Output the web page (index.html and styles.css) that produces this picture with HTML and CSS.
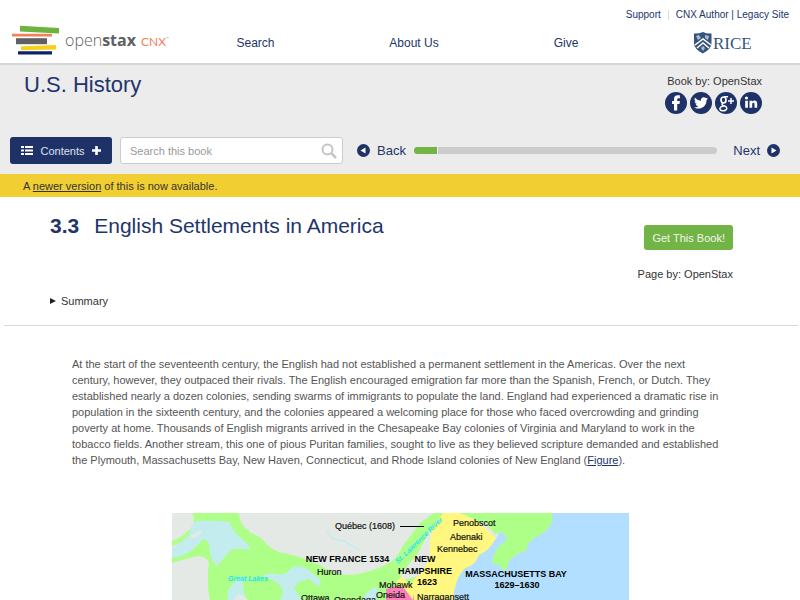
FILE: index.html
```html
<!DOCTYPE html>
<html lang="en">
<head>
<meta charset="utf-8">
<meta name="viewport" content="width=device-width, initial-scale=1">
<title>English Settlements in America - U.S. History - OpenStax CNX</title>
<link rel="stylesheet" href="styles.css">
</head>
<body>
<header class="site-header">
  <div class="utility">
    <a href="#">Support</a>
    <span class="divider"></span>
    <a href="#">CNX Author | Legacy Site</a>
  </div>
  <nav class="main-nav">
    <a class="logo" href="#">
      <svg width="176" height="41" viewBox="0 22 176 41" role="img" aria-label="OpenStax CNX">
        <path fill="#6db33f" d="M20 25.800 59 28v5.600l-39-2z"/>
        <path fill="#f0825a" d="M12 33.800h40v2.800H12z"/>
        <path fill="#5f6062" d="M16 38.200h31v6H16z"/>
        <path fill="#f5d11d" d="m21 46.200 35-1.200v4.400l-35 .8z"/>
        <path fill="#0b2265" d="M18 51.200h34v3.400H18z"/>
        <text class="logo-open" x="65" y="46">open<tspan class="logo-stax">stax</tspan></text>
        <text class="logo-cnx" x="141" y="46">CNX</text>
        <text class="logo-tm" x="166" y="40">™</text>
      </svg>
    </a>
    <a href="#">Search</a>
    <a href="#">About Us</a>
    <a href="#">Give</a>
    <a class="rice" href="#">
      <svg width="60" height="22" viewBox="0 0 60 22" role="img" aria-label="Rice">
        <path fill="#36557c" d="M0 1.500Q4 2 9 0q4 2 8.500 1.500V11q0 6-8.700 10.500Q0 17 0 11z"/>
        <path fill="#a9bdd2" d="m2 4 3-1 2 3-3 2zm9-1 4 1-1 4-3-2zM7 16l2-2 2 2-2 3z"/>
        <path fill="none" stroke="#fff" stroke-width="1.500" d="m1 13 8-6 8 6M3 16l6-5 6 5"/>
        <text class="rice-name" x="19" y="17">RICE</text>
      </svg>
    </a>
  </nav>
</header>

<section class="book-bar">
  <div class="book-head">
    <h2>U.S. History</h2>
    <div class="book-meta">
      <div>Book by: OpenStax</div>
      <div class="social">
        <a href="#" aria-label="Facebook"><svg width="22" height="22" viewBox="0 0 22 22"><circle cx="11" cy="11" r="11"/><path fill="#fff" d="M9 18.500V12H7V9h2V7q0-3.700 3.700-3.700h2.200v2.900h-1.500q-1.200 0-1.200 1.200V9h2.700l-.4 3h-2.300v6.500z"/></svg></a>
        <a href="#" aria-label="Twitter"><svg width="22" height="22" viewBox="0 0 22 22"><circle cx="11" cy="11" r="11"/><path fill="#fff" d="M18 6.500q-.8.400-1.600.4.900-.5 1.200-1.500-.8.500-1.800.7a2.900 2.900 0 0 0-4.900 2.600Q7.400 8.500 5 5.700 3.700 8 5.900 9.600q-.7 0-1.300-.4 0 2.100 2.300 2.900-.6.200-1.300.1.700 1.800 2.700 2-1.900 1.500-4.300 1.200 2 1.200 4.400 1.200c5.300 0 8.300-4.300 8.100-8.600q.9-.6 1.500-1.500z"/></svg></a>
        <a href="#" aria-label="Google Plus"><svg width="22" height="22" viewBox="0 0 22 22"><circle cx="11" cy="11" r="11"/><g fill="none" stroke="#fff"><ellipse cx="8.500" cy="8" rx="2.500" ry="3" stroke-width="1.700"/><path stroke-width="1.500" d="M9 4.800h4M8 11q-2 1.500 0 2.400c2 .8 3.800 1 3.800 2.800 0 2-2.200 2.700-4 2.500-2.600-.2-3.300-1.600-2.700-2.900.5-1.200 2-1.500 3.600-1.500M16 6v6M13 9h6"/></g></svg></a>
        <a href="#" aria-label="LinkedIn"><svg width="22" height="22" viewBox="0 0 22 22"><circle cx="11" cy="11" r="11"/><g fill="#fff"><circle cx="6.500" cy="6" r="1.600"/><path d="M5.200 8.700h2.700v7H5.200zM9.500 8.700H12v1q.8-1.200 2.400-1.200 2.800 0 2.800 3.200v4h-2.700V12q0-1.300-1.100-1.300-1.200 0-1.200 1.400v3.600H9.500z"/></g></svg></a>
      </div>
    </div>
  </div>
  <div class="controls">
    <button class="contents" type="button">
      <svg width="12" height="10" viewBox="0 0 12 10"><path fill="#fff" d="M0 0h3v2H0zm4 0h8v2H4zM0 3.500h3v2H0zm4 0h8v2H4zM0 7h3v2H0zm4 0h8v2H4z"/></svg>
      <span>Contents</span>
      <svg width="9" height="9" viewBox="0 0 9 9"><path fill="#fff" d="M3.200 0h2.600v3.200H9v2.600H5.800V9H3.200V5.800H0V3.200h3.200z"/></svg>
    </button>
    <form class="book-search">
      <input type="text" aria-label="Search this book" placeholder="Search this book">
      <button type="button" aria-label="Search"><svg width="16" height="16" viewBox="0 0 16 16"><g fill="none" stroke="#c4c4c4" stroke-width="2"><circle cx="6.500" cy="6.500" r="5"/><path stroke-width="2.500" d="m10.500 10.500 4.500 4.500"/></g></svg></button>
    </form>
    <a class="step" href="#">
      <svg width="13" height="13" viewBox="0 0 13 13"><circle cx="6.500" cy="6.500" r="6.500"/><path fill="#fff" d="M8.500 3.500v6l-5-3z"/></svg>
      Back
    </a>
    <div class="progress" role="progressbar" aria-label="Reading progress" aria-valuenow="8" aria-valuemin="0" aria-valuemax="100"><span style="width: 8%"></span></div>
    <a class="step" href="#">
      Next
      <svg width="13" height="13" viewBox="0 0 13 13"><circle cx="6.500" cy="6.500" r="6.500"/><path fill="#fff" d="M4.500 3.500v6l5-3z"/></svg>
    </a>
  </div>
</section>

<p class="notice">A <a href="#">newer version</a> of this is now available.</p>

<main>
  <section class="page-head">
    <div class="page-title">
      <h1><b>3.3</b><span>English Settlements in America</span></h1>
      <div class="page-meta">
        <button class="get-book" type="button">Get This Book!</button>
        <div>Page by: OpenStax</div>
      </div>
    </div>
    <details>
      <summary>Summary</summary>
    </details>
  </section>
  <article>
    <p>At the start of the seventeenth century, the English had not established a permanent settlement in the Americas. Over the next<br>
    century, however, they outpaced their rivals. The English encouraged emigration far more than the Spanish, French, or Dutch. They<br>
    established nearly a dozen colonies, sending swarms of immigrants to populate the land. England had experienced a dramatic rise in<br>
    population in the sixteenth century, and the colonies appeared a welcoming place for those who faced overcrowding and grinding<br>
    poverty at home. Thousands of English migrants arrived in the Chesapeake Bay colonies of Virginia and Maryland to work in the<br>
    tobacco fields. Another stream, this one of pious Puritan families, sought to live as they believed scripture demanded and established<br>
    the Plymouth, Massachusetts Bay, New Haven, Connecticut, and Rhode Island colonies of New England (<a href="#">Figure</a>).</p>
    <figure>
      <svg class="map" viewBox="172 513 457 87" role="img" aria-label="Map of the North American colonies">
        <path fill="#e5e9e6" d="M172 513h457v87H172z"/>
        <path fill="#aeff88" d="M192 513h47q1 14 10 17 10 4 18 14 20 6 34 9 15 5 20 13 15 9 28 9 22-2 38-11 11-6 15-17l18-24 14-10h46v87H210q-4-18-1-37-1-6-11-7-14 3-26 7v-12q10-5 14-9-12 2-14 5v-6q10-3 20-14 4-8 0-14z"/>
        <path fill="#e5e9e6" d="M249 513h171q-5 12-14 22-6 15-22 24-12 6-20 9-11 5-27 5-8-8-23-10-14-7-35-11-10-4-16-12-5-5-14-8z"/>
        <path fill="#c3ecef" d="M172 548q12-7 18-14 0-14 11-13 18-1 28 1 6 12 13 17 8 6 8 11-15-3-20 1-7 8-13 15-6-6-7-14 0-12-7-13-8 10-17 15-7 3-14 4z"/>
        <path fill="#e5e9e6" d="m190 536 10-6 2 2-5 5-7 1z"/>
        <path fill="#c3ecef" d="M239 578q21-1 33-5 4 3 15 0 6-10 19-5l15 12-2 7-10-8-10 3-5 6 8 12h-74q-2-8 3-14z"/>
        <path fill="#aeff88" d="M243 581q10-9 25-3 15 6 15 15l-3 7h-33q-5-9-4-19z"/>
        <path fill="#e5e9e6" d="M248 600q-5-6-11-5l-3 5zM172 566q14-5 26-6 9 0 10 6-2 18 1 34h-37z"/>
        <path fill="none" stroke="#c3ecef" stroke-width="1.500" d="m327 531 6 8 11 2 8 5 7 4"/>
        <path fill="#b2dfff" d="M534 513h95v87H451l4-29 12-3 14-18 15-11 4-9z"/>
        <path fill="#fff77f" d="M443 513h25q9 10 17 15l11 10q-7 13-17 17-4 11-14 13l-6 8q-5 11-6 24h-51l11-19q10-10 10-25-4-10 7-23 8-12 13-20z"/>
        <path fill="#aeff88" d="M460 513h92q3 14-14 23-10 4-12 15-8 1-16 9l-5 12-6-7-7-2q1-14 15-23l-4-8-8 2-11-12-13-4z"/>
        <path fill="#e5e9e6" d="M433 525q-4 15-3 33l-11 18-15 4-4-5 18-22z"/>
        <path fill="#c3ecef" d="m376 587 3 5-3 8h-13q2-9 13-13z"/>
        <path fill="#ff80bb" d="m386 589 11-3 9 1 8 8v5h-28z"/>
        <path fill="#fff77f" d="m397 581 5-5 12 16-1 8-9-12-7-3z"/>
        <path stroke="#000" d="M400 526.500h24"/>
        <g class="water">
          <text x="228" y="581">Great Lakes</text>
          <text transform="translate(398 564) rotate(-44)">St. Lawrence River</text>
        </g>
        <g class="places">
          <text x="335" y="529">Québec (1608)</text>
          <text x="453" y="526">Penobscot</text>
          <text x="450" y="540">Abenaki</text>
          <text x="437" y="552">Kennebec</text>
          <text x="317" y="575">Huron</text>
          <text x="379" y="588">Mohawk</text>
          <text x="376" y="598">Oneida</text>
          <text x="301" y="601">Ottawa</text>
          <text x="334" y="603">Onondaga</text>
          <text x="417" y="600">Narragansett</text>
        </g>
        <g class="colonies">
          <text x="347.500" y="562">NEW FRANCE 1534</text>
          <text x="425" y="562">NEW</text>
          <text x="425" y="574">HAMPSHIRE</text>
          <text x="427" y="585">1623</text>
          <text x="516" y="577">MASSACHUSETTS BAY</text>
          <text x="517" y="588">1629–1630</text>
        </g>
      </svg>
    </figure>
  </article>
</main>
</body>
</html>
```
FILE: styles.css
```css
* { box-sizing: border-box; }
body {
  margin: 0;
  background: #fff;
  color: #333;
  font: 11px/16px "Liberation Sans", Arial, sans-serif;
}
a { color: #22356b; text-decoration: none; }
h1, h2, p, figure { margin: 0; font-weight: normal; }
svg { display: block; }
button, input { font: inherit; }

.site-header { border-bottom: 2px solid #d6d6d6; }
.utility {
  display: flex;
  justify-content: flex-end;
  align-items: center;
  gap: 7px;
  height: 22px;
  padding: 7px 11px 0 0;
  font-size: 10px;
}
.divider { width: 1px; height: 10px; background: #ddd; }
.main-nav {
  display: grid;
  grid-template-columns: 176px 159fr 158fr 146fr 161fr;
  align-items: center;
  justify-items: center;
  font-size: 12px;
}
.logo-open { font: 300 16px "Open Sans", sans-serif; fill: #5f6062; }
.logo-stax { font-weight: 700; }
.logo-cnx { font: 12px Lato, sans-serif; fill: #f0825a; }
.logo-tm { font: 4px Lato, sans-serif; fill: #f0825a; }
.rice { padding-left: 8px; }
.rice-name { font: 17px "Liberation Serif", serif; fill: #36557c; }

.book-bar { background: #ececec; padding: 8px 20px 10px 10px; }
.book-head {
  display: flex;
  justify-content: space-between;
  padding: 0 18px 0 14px;
  height: 64px;
}
.book-head h2 { font-size: 22px; line-height: 24px; color: #22356b; }
.book-meta { text-align: right; }
.social { display: flex; gap: 3px; margin-top: 3px; }
.social svg, .step svg { fill: #1e3268; }
.controls { display: flex; align-items: center; }
.contents {
  display: flex;
  align-items: center;
  justify-content: center;
  gap: 7px;
  width: 102px;
  height: 27px;
  padding: 0;
  border: 0;
  border-radius: 3px;
  background: #1e3268;
  color: #dfe3ee;
}
.book-search {
  display: flex;
  align-items: center;
  flex: 0 1 223px;
  height: 27px;
  margin: 0 14px 0 8px;
  padding: 0 5px 0 9px;
  border: 1px solid #ccc;
  border-radius: 3px;
  background: #fff;
}
.book-search input {
  flex: 1;
  min-width: 0;
  padding: 0;
  border: 0;
  outline: 0;
  background: none;
}
.book-search input::placeholder { color: #999; opacity: 1; }
.book-search button { padding: 0; border: 0; background: none; }
.step { display: flex; align-items: center; gap: 7px; font-size: 13px; }
.progress {
  flex: 1;
  height: 7px;
  margin: 0 16px 0 8px;
  border-radius: 4px;
  background: #ccc;
  overflow: hidden;
}
.progress span {
  display: block;
  height: 7px;
  border-right: 1px solid #ececec;
  background: #73b446;
}
.notice { padding: 4px 23px 3px; background: #f1cf32; }
.notice a { color: inherit; text-decoration: underline; }

.page-head {
  margin: 0 2px 0 4px;
  padding: 17px 65px 16px 46px;
  border-bottom: 1px solid #d9d9d9;
}
.page-title { display: flex; justify-content: space-between; }
h1 {
  display: flex;
  gap: 15px;
  color: #22356b;
  font-size: 21px;
  line-height: 24px;
}
.page-meta { padding-top: 11px; text-align: right; }
.get-book {
  height: 25px;
  margin-bottom: 16px;
  padding: 0 8px;
  border: 0;
  border-radius: 3px;
  background: #73b446;
  color: #f0f8ea;
}
details { margin-top: 11px; }
summary { display: flex; align-items: center; gap: 5px; list-style: none; }
summary::before {
  content: "";
  border: solid transparent;
  border-width: 3px 0 3px 6px;
  border-left-color: #222;
}
article { padding: 30px 72px 0; color: #555; }
article p { white-space: nowrap; }
article p a { text-decoration: underline; }
figure { margin-top: 45px; }
.map { width: 70%; max-width: 457px; margin: 0 auto; }
.water { fill: #18e6ee; font: italic bold 7px "Liberation Sans", sans-serif; }
.places { fill: #111; font: 9px "Liberation Sans", sans-serif; stroke: #111; stroke-width: 0.2px; }
.colonies { fill: #000; font: bold 9px "Liberation Sans", sans-serif; text-anchor: middle; }
```
